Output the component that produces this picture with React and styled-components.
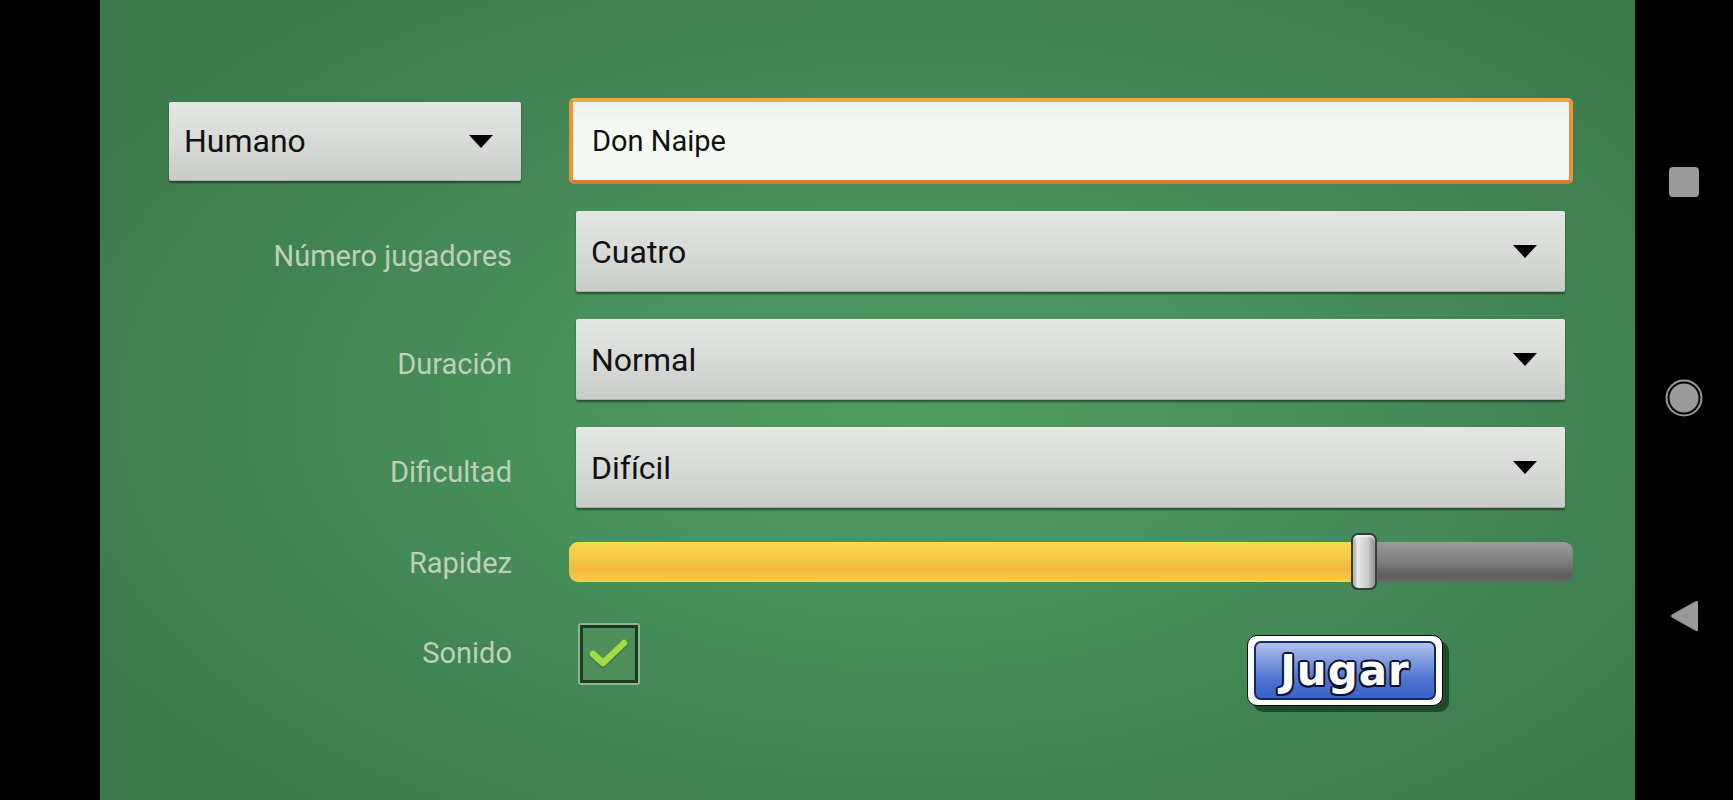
import styled, { createGlobalStyle } from "styled-components";

const GlobalStyle = createGlobalStyle`
  html, body, #root {
    height: 100%;
  }
  body {
    margin: 0;
    background: #000;
    font-family: Roboto, "Noto Sans", sans-serif;
    overflow: hidden;
  }
`;

const Screen = styled.div`
  display: flex;
  width: 1733px;
  height: 800px;
  background: #000;
`;

const SideBar = styled.div`
  width: 100px;
  flex-shrink: 0;
  background: #000;
`;

const Table = styled.div`
  flex: 1;
  background: radial-gradient(
    ellipse 62% 66% at 53% 51%,
    #4f9b61 0%,
    #4a925c 35%,
    #428654 65%,
    #3c7a4b 100%
  );
`;

const Form = styled.div`
  display: grid;
  grid-template-columns: 352px 1004px;
  column-gap: 48px;
  row-gap: 27px;
  align-items: center;
  padding: 98px 0 0 69px;
`;

const Label = styled.div`
  justify-self: end;
  padding-right: 9px;
  padding-top: ${(p) => (p.$shift ? "9px" : "0")};
  margin-top: ${(p) => (p.$top ? "4px" : "0")};
  font-size: 29px;
  color: #bdd0bc;
  align-self: ${(p) => (p.$top ? "start" : "center")};
  line-height: ${(p) => (p.$top ? "64px" : "normal")};
`;

const SelectBox = styled.div`
  display: flex;
  align-items: center;
  justify-content: space-between;
  height: ${(p) => p.$h || 81}px;
  margin: ${(p) => (p.$inset ? "0 8px 0 7px" : "0")};
  padding: 0 28px 0 15px;
  box-sizing: border-box;
  border-radius: 2px;
  background: linear-gradient(180deg, #e4e7e3 0%, #d6d9d5 55%, #c8cbc7 100%);
  box-shadow: 0 2px 2px rgba(0, 0, 0, 0.45), inset 0 -1px 0 rgba(0, 0, 0, 0.15);
  font-size: 32px;
  color: #111;
`;

const Arrow = styled.span`
  width: 0;
  height: 0;
  border-left: 12.5px solid transparent;
  border-right: 12.5px solid transparent;
  border-top: 13px solid #000;
`;

const NameInput = styled.input`
  height: 86px;
  width: 100%;
  box-sizing: border-box;
  border: 4px solid #ee9438;
  border-bottom-color: #e07a28;
  border-top-color: #f3a446;
  border-radius: 5px;
  background: linear-gradient(180deg, #eef2ed 0%, #f5f9f4 30%, #f5f9f4 100%);
  padding: 0 19px;
  font-family: Roboto, sans-serif;
  font-size: 29px;
  color: #111;
  outline: none;
`;

const SliderWrap = styled.div`
  position: relative;
  height: 57px;
  display: flex;
  align-items: center;
  margin-top: -2px;
`;

const Track = styled.div`
  position: relative;
  width: 100%;
  height: 40px;
  border-radius: 9px;
  overflow: hidden;
  background: linear-gradient(180deg, #9c9c9c 0%, #7d7d7d 50%, #5d5d5d 85%, #6a6a6a 100%);
`;

const Fill = styled.div`
  height: 100%;
  background: linear-gradient(180deg, #f9da4a 0%, #f4c444 45%, #f1b83d 70%, #f7d04a 100%);
`;

const Thumb = styled.div`
  position: absolute;
  top: 0;
  width: 26px;
  height: 57px;
  box-sizing: border-box;
  margin-left: -13px;
  border: 2px solid #3a3a3a;
  border-radius: 7px;
  background: linear-gradient(90deg, #9a9a9a 0%, #e8e8e8 20%, #c8c8c8 70%, #8a8a8a 100%);
  box-shadow: inset 0 2px 2px rgba(255, 255, 255, 0.7);
`;

const BottomRow = styled.div`
  display: flex;
  align-items: flex-start;
  align-self: start;
  margin-top: 4px;
`;

const CheckBox = styled.div`
  width: 62px;
  height: 62px;
  margin: 2px 0 0 9px;
  box-sizing: border-box;
  border: 2px solid #8db790;
  border-radius: 3px;
  display: flex;
  align-items: center;
  justify-content: center;
`;

const CheckInner = styled.div`
  width: 100%;
  height: 100%;
  box-sizing: border-box;
  border: 3px solid #1d3a22;
  background: #4f8f5b;
  display: flex;
  align-items: center;
  justify-content: center;
`;

const PlayButton = styled.button`
  margin: 14px 0 0 607px;
  width: 196px;
  height: 71px;
  box-sizing: border-box;
  border: 1.5px solid #000;
  border-radius: 10px;
  background: #fff;
  box-shadow: 6px 6px 0 #1f4a2a;
  display: flex;
  align-items: stretch;
  padding: 5px 6px;
`;

const PlayFace = styled.span`
  flex: 1;
  border: 2px solid #14286e;
  border-radius: 7px;
  background: linear-gradient(180deg, #b0c2ec 0%, #7c98dd 35%, #4f74d2 65%, #3a62c8 100%);
  display: flex;
  align-items: center;
  justify-content: center;
  font-family: "DejaVu Sans", Verdana, sans-serif;
  font-weight: bold;
  font-size: 42px;
  color: #fff;
  letter-spacing: 1px;
  text-shadow: -1.5px -1.5px 0 #0b1530, 1.5px -1.5px 0 #0b1530,
    -1.5px 1.5px 0 #0b1530, 1.5px 1.5px 0 #0b1530, 0 -2px 0 #0b1530,
    0 2px 0 #0b1530, -2px 0 0 #0b1530, 2px 0 0 #0b1530;
`;

const NavBar = styled.div`
  width: 98px;
  flex-shrink: 0;
  display: flex;
  flex-direction: column;
  align-items: center;
  justify-content: space-between;
  padding: 167px 0;
  box-sizing: border-box;
`;

const NavSquare = styled.div`
  width: 30px;
  height: 30px;
  border-radius: 4px;
  background: #9a9a9a;
`;

const Select = ({ value, height, inset }) => (
  <SelectBox $h={height} $inset={inset}>
    <span>{value}</span>
    <Arrow />
  </SelectBox>
);

const Slider = ({ value }) => (
  <SliderWrap>
    <Track>
      <Fill style={{ width: `${value}%` }} />
    </Track>
    <Thumb style={{ left: `${value}%` }} />
  </SliderWrap>
);

export default function App() {
  return (
    <>
      <GlobalStyle />
      <Screen>
        <SideBar />
        <Table>
          <Form>
            <Select value="Humano" height={79} />
            <NameInput readOnly value="Don Naipe" />

            <Label $shift>Número jugadores</Label>
            <Select value="Cuatro" inset />

            <Label $shift>Duración</Label>
            <Select value="Normal" inset />

            <Label $shift>Dificultad</Label>
            <Select value="Difícil" inset />

            <Label>Rapidez</Label>
            <Slider value={79.2} />

            <Label $top>Sonido</Label>
            <BottomRow>
              <CheckBox>
                <CheckInner>
                  <svg width="42" height="34" viewBox="0 0 42 34">
                    <path
                      d="M5 18 L15 27 L36 7"
                      fill="none"
                      stroke="#2f5a1a"
                      strokeWidth="8"
                      strokeLinecap="round"
                      strokeLinejoin="round"
                      opacity="0.35"
                    />
                    <path
                      d="M5 17 L15 26 L36 6"
                      fill="none"
                      stroke="#a3dc45"
                      strokeWidth="6.5"
                      strokeLinecap="round"
                      strokeLinejoin="round"
                    />
                  </svg>
                </CheckInner>
              </CheckBox>
              <PlayButton>
                <PlayFace>Jugar</PlayFace>
              </PlayButton>
            </BottomRow>
          </Form>
        </Table>
        <NavBar>
          <NavSquare />
          <svg width="38" height="38" viewBox="0 0 38 38">
            <circle cx="19" cy="19" r="17.5" fill="none" stroke="#9a9a9a" strokeWidth="2" />
            <circle cx="19" cy="19" r="14.5" fill="#9a9a9a" />
          </svg>
          <svg width="30" height="34" viewBox="0 0 30 34">
            <path
              d="M27 2 Q29 1 29 4 L29 30 Q29 33 27 32 L3 18.5 Q1 17 3 15.5 Z"
              fill="#9a9a9a"
            />
          </svg>
        </NavBar>
      </Screen>
    </>
  );
}
